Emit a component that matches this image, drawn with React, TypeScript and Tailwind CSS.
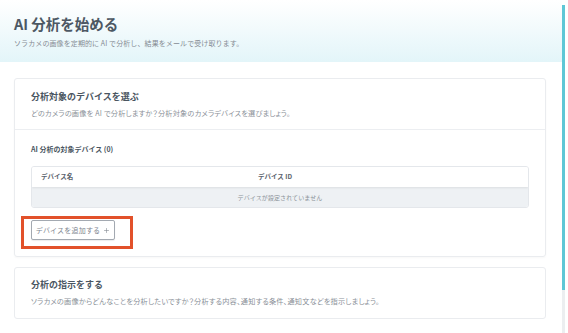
import { Plus } from 'lucide-react';

const font = { fontFamily: '"Noto Sans CJK JP", "Noto Sans", sans-serif' };

function SectionHead({ title, desc, top }: { title: string; desc: string; top: string }) {
  return (
    <div className={`px-4 ${top}`}>
      <h2 className="text-[9px] leading-[12px] font-bold text-[#4a5561]">{title}</h2>
      <p className="mt-[5px] text-[7.2px] leading-[10px] tracking-[0.2px] [font-feature-settings:'palt'] text-[#8b9199]">{desc}</p>
    </div>
  );
}

export default function App() {
  return (
    <div style={font} className="w-[568px] h-[333px] bg-white flex overflow-hidden">
      {/* main column */}
      <div className="w-[562px] flex flex-col">
        {/* page header */}
        <div className="h-[62px] px-[14px] pt-[14px] bg-gradient-to-b from-white to-[#e3f5f9]">
          <h1 className="text-[14.5px] leading-[20px] font-bold text-[#4d5864]">AI 分析を始める</h1>
          <p className="mt-[4px] text-[7px] leading-[10px] tracking-[0.1px] text-[#868c94]">
            ソラカメの画像を定期的に AI で分析し、結果をメールで受け取ります。
          </p>
        </div>

        <div className="pl-[14px] pr-[16px] pt-4 flex flex-col gap-[10px]">
          {/* device card */}
          <div className="rounded-[3px] border border-[#eaecef] shadow-[0_1px_2px_rgba(0,0,0,0.03)]">
            <div className="h-[51px] border-b border-[#eceef1]">
              <SectionHead
                top="pt-[12px]"
                title="分析対象のデバイスを選ぶ"
                desc="どのカメラの画像を AI で分析しますか？分析対象のカメラデバイスを選びましょう。"
              />
            </div>
            <div className="px-4 pt-[14px] pb-4">
              <div className="text-[7px] leading-[10px] font-bold text-[#4a5561]">AI 分析の対象デバイス (0)</div>

              <div className="mt-3 rounded-[3px] border border-[#e4e7eb] overflow-hidden">
                <div className="h-[20px] grid grid-cols-[217px_1fr] items-center bg-white shadow-[0_1px_2px_rgba(0,0,0,0.08)] relative">
                  <div className="pl-[9px] text-[6.5px] font-bold text-[#5b636d]">デバイス名</div>
                  <div className="pl-[9px] text-[6.5px] font-bold text-[#5b636d]">デバイス ID</div>
                </div>
                <div className="h-[20px] flex items-center justify-center bg-[#eef1f4] text-[6px] tracking-[0.1px] text-[#8b9199]">
                  デバイスが設定されていません
                </div>
              </div>

              <div className="mt-3 relative w-[84px]">
                <button className="h-[20px] w-[84px] flex items-center justify-center gap-[3px] rounded-[2px] border border-[#a3a9b1] bg-white shadow-[0_1px_1px_rgba(0,0,0,0.08)] text-[7px] tracking-[0.2px] text-[#80868f]">
                  デバイスを追加する
                  <Plus className="w-[7px] h-[7px]" strokeWidth={2} />
                </button>
                <div className="absolute left-[-10px] top-[-4px] w-[112px] h-[33px] border-[3px] border-[#e2512a] pointer-events-none" />
              </div>
            </div>
          </div>

          {/* instruction card */}
          <div className="h-[52px] rounded-[3px] border border-[#eaecef]">
            <SectionHead
              top="pt-[11px]"
              title="分析の指示をする"
              desc="ソラカメの画像からどんなことを分析したいですか？分析する内容、通知する条件、通知文などを指示しましょう。"
            />
          </div>
        </div>
      </div>

      {/* scrollbar */}
      <div className="w-[3px] flex flex-col pt-[5px]">
        <div className="h-[285px] bg-[#5ec7d6]" />
        <div className="flex-1 bg-[#eceef0]" />
      </div>
    </div>
  );
}
